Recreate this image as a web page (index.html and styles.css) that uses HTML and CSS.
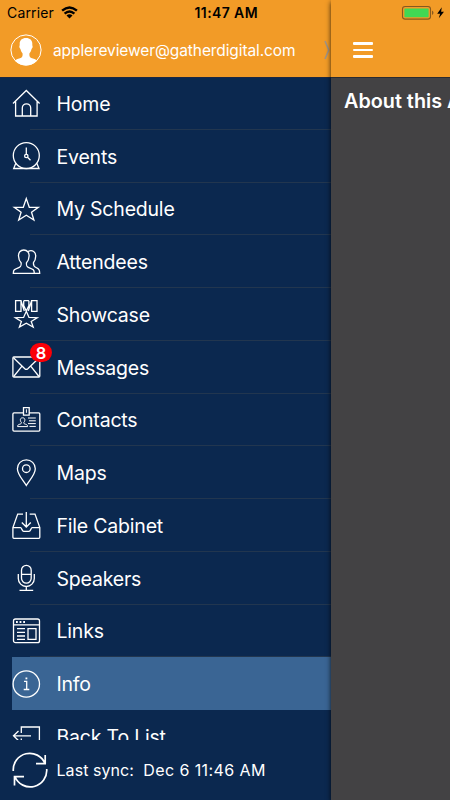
FILE: index.html
```html
<!DOCTYPE html>
<html lang="en">
<head>
    <meta charset="UTF-8">
    <meta name="viewport" content="width=device-width, initial-scale=1.0">
    <title>Info</title>
    <link rel="stylesheet" href="styles.css">
</head>
<body>
    <div class="screen">
        <div class="status">
            <span class="carrier">Carrier</span>
            <svg class="wifi" width="17" height="13" viewBox="0 0 17 13">
                <path d="M1.1 4.700 Q8.500 -1.700 15.900 4.700M3.600 7.700 Q8.500 3.300 13.400 7.700"/>
                <path class="dot" d="M5.500 9.500 Q8.500 7 11.500 9.500 L8.500 12.600z"/>
            </svg>
            <span class="time">11:47 AM</span>
            <svg class="battery" width="44" height="16" viewBox="0 0 44 16">
                <rect class="case" x="1.500" y="1.500" width="28" height="12.600" rx="2.600"/>
                <rect class="charge" x="3.400" y="3.400" width="24.200" height="8.800" rx=".6"/>
                <path class="tip" d="M31 5.600 q1.500 .7 1.500 2.200 t-1.500 2.200z"/>
                <path class="bolt" d="M40.800 2.200 L36.200 8.700 h2.900 L37.800 13.300 L43 6.800 h-2.900z"/>
            </svg>
        </div>

        <div class="menu">
            <div class="user">
                <svg class="avatar" width="32" height="32" viewBox="0 0 32 32">
                    <circle class="ring" cx="16" cy="16" r="15.1"/>
                    <path d="M16 3.900c-4.200 0-6.600 2.600-6.300 6.500.1 1.300-.5 1.600-.3 2.800.2 1 .9 1.100 1.100 2 .4 2 1.300 3 2 4 .4 3-.2 4.200-2.500 5.100-2.400.9-4.300 1.200-5.100 2.400A15.100 15.100 0 0 0 27.100 26.700c-.9-1.200-2.700-1.500-5.100-2.400-2.300-.9-2.900-2.100-2.500-5.100.7-1 1.600-2 2-4 .2-.9.900-1 1.100-2 .2-1.200-.4-1.500-.3-2.800.3-3.900-2.100-6.500-6.300-6.500z"/>
                </svg>
                <span class="email">applereviewer@gatherdigital.com</span>
                <svg class="chevron" width="6" height="20" viewBox="0 0 6 20"><path d="M1 1 L4.700 10 L1 19"/></svg>
            </div>

            <div class="list">
                <div class="item">
                    <svg class="icon" viewBox="0 0 30 30"><path d="M2 15.500 L15.300 2.500 L28.600 15.500M4.600 13.500V28H11.300V20a4.200 4.200 0 0 1 8.400 0V28H26.100V13.500M11.300 28h8.400"/></svg>
                    <span class="label">Home</span>
                </div>
                <div class="item">
                    <svg class="icon" viewBox="0 0 30 30"><circle cx="15.300" cy="14.600" r="13"/><circle cx="15.300" cy="15" r="1.700"/><path d="M15.300 6.400V13.300M16.500 16.200l3 3M4.800 22.300 L2.700 27.500H28L25.800 22.300"/></svg>
                    <span class="label">Events</span>
                </div>
                <div class="item">
                    <svg class="icon" viewBox="0 0 30 30"><path d="M15.300 4.600 L18.300 13.300H27.300L20.500 18.200 L22.900 26 L15.300 21.300 L7.700 26 L10.100 18.200 L3.300 13.300H12.300z"/></svg>
                    <span class="label">My Schedule</span>
                </div>
                <div class="item">
                    <svg class="icon" viewBox="0 0 30 30"><path d="M12.800 3C9.300 3 7.300 5.700 7.500 9c.1 3 .9 5 2.600 6.700.4 3.100-.2 4-2.800 5.100C3.400 22.300 2.300 22.700 2.300 26.300H23.300c0-3.600-1.100-4-5-5.500-2.600-1.100-3.200-2-2.800-5.100C17.200 14 18 12 18.100 9c.2-3.300-1.800-6-5.300-6zM17.300 4.300c4.200-1.800 7.600.8 7.400 4.900-.1 3-.7 4.700-2.200 6.300-.4 2.900.2 3.900 2.500 5 2.800 1.300 3.700 2.200 3.700 5.800H23.300"/></svg>
                    <span class="label">Attendees</span>
                </div>
                <div class="item">
                    <svg class="icon" viewBox="0 0 30 30"><path d="M15.300 12.300 L18 18.400 L26.200 18.700 L20.200 22.500 L22.200 28 L15.300 24.300 L8.400 28 L10.400 22.500 L4.400 18.700 L12.600 18.400zM4.600 1.700H10V12.300H4.600zM20.600 1.700H26V12.300H20.600zM12.700 1.700h5.200M10 1.700l3.300 10.300M20.600 1.700l-3.300 10.300M12.700 1.700v4.800l2.600 5.500 2.600-5.500v-4.800"/></svg>
                    <span class="label">Showcase</span>
                </div>
                <div class="item">
                    <svg class="icon" viewBox="0 0 30 30"><rect x="1.900" y="5" width="26.900" height="20" rx="1"/><path d="M2.500 5.700 L13.800 16.700q1.500 1.300 3 0L28.200 5.700M11 14.200 L2.700 24.500M19.700 14.200 L28 24.500"/></svg>
                    <span class="badge">8</span>
                    <span class="label">Messages</span>
                </div>
                <div class="item">
                    <svg class="icon" viewBox="0 0 30 30"><path d="M12.300 7.800H3q-1.100 0-1.100 1.100V25q0 1.100 1.100 1.100H27.700q1.100 0 1.100-1.100V8.900q0-1.100-1.100-1.100H18.300M12.500 2.700h5.700v7.500H12.500z"/><path class="thin" d="M15.400 4.300v3.500M11.600 12.800c-1.700 0-2.500 1.200-2.200 2.600.1 1 .5 1.600 1 2.100 0 1.200-.4 1.300-1.600 1.700-1.700.5-2.200.9-2.200 2.400h10c0-1.500-.5-1.900-2.200-2.400-1.200-.4-1.600-.5-1.600-1.700.5-.5.9-1.100 1-2.100.3-1.400-.5-2.600-2.200-2.600zM17 13h7.800M18 15.800h6.800M17 18.600h7.800M18.500 21.400h6.300"/></svg>
                    <span class="label">Contacts</span>
                </div>
                <div class="item">
                    <svg class="icon" viewBox="0 0 30 30"><path d="M15.300 1.800A8.900 8.900 0 0 0 6.400 10.700C6.400 16.500 12 22 15.300 27.400C18.600 22 24.300 16.500 24.300 10.700A8.900 8.900 0 0 0 15.300 1.800z"/><circle cx="15.300" cy="10.700" r="3.800"/></svg>
                    <span class="label">Maps</span>
                </div>
                <div class="item">
                    <svg class="icon" viewBox="0 0 30 30"><path d="M12 4.100H6.700L1.900 17.500V27.300q0 1 1 1H27.800q1 0 1-1V17.500L24 4.100H18.700M1.900 17.700H9.500c1.300 0 1.500 3.700 3.200 3.700h5.300c1.700 0 1.900-3.700 3.200-3.700h7.600M15.300 2V16.800M10.800 12.500l4.500 4.500 4.500-4.500"/></svg>
                    <span class="label">File Cabinet</span>
                </div>
                <div class="item">
                    <svg class="icon" viewBox="0 0 30 30"><rect x="10.500" y="2.400" width="9.700" height="17.800" rx="4.850"/><path d="M10.500 11.300h9.700M7.300 11v4.500a8 8 0 0 0 16 0V11M15.300 23.700v3.700M8.500 27.400h13.700"/></svg>
                    <span class="label">Speakers</span>
                </div>
                <div class="item">
                    <svg class="icon" viewBox="0 0 30 30"><rect x="2.500" y="3" width="26" height="23.700" rx="2"/><path d="M2.500 8.900h26M6 12.700h8M6 16.400h8M6 20h8M6 23.300h8M17 12.700h8v10.600h-8z"/><path class="dots" d="M5 6h1.800M8.600 6h1.800M12.200 6h1.800"/></svg>
                    <span class="label">Links</span>
                </div>
                <div class="item active">
                    <svg class="icon" viewBox="0 0 30 30"><circle cx="15.300" cy="15" r="13.200"/><path d="M13 12.400h2.700v8M12.700 20.500h5.600"/><path class="dots" d="M14.500 9.400h1.800"/></svg>
                    <span class="label">Info</span>
                </div>
                <div class="item">
                    <svg class="icon" viewBox="0 0 30 30"><path d="M10.300 12V6H28.400V24H10.300V17.500M20 14.800H2.500M7.500 10l-5 4.800 5 4.800"/></svg>
                    <span class="label">Back To List</span>
                </div>
            </div>

            <div class="sync">
                <svg class="refresh" width="36" height="36" viewBox="0 0 36 36"><path d="M1.300 19A16.500 16.500 0 0 1 33 11.500M33.200 3v8.700H24M34.700 17A16.500 16.500 0 0 1 3 24.700M2.500 33.500V24.700H12"/></svg>
                <span class="last">Last sync:</span>
                <span class="date">Dec 6 11:46 AM</span>
            </div>
        </div>

        <div class="page">
            <div class="navbar">
                <div class="burger"><i></i><i></i><i></i></div>
            </div>
            <h1 class="title">About this App</h1>
        </div>
    </div>
</body>
</html>
```

FILE: styles.css
```css
body{
    margin: 0;
    font-family: Inter, "Liberation Sans", sans-serif;
    color: white;
}
svg{
    flex: none;
    fill: none;
    stroke: white;
}
.screen{
    position: relative;
    display: flex;
    width: 450px;
    height: 800px;
    overflow: hidden;
}

/* status bar lies over both panels */
.status{
    position: absolute;
    z-index: 3;
    top: 0;
    left: 0;
    display: flex;
    align-items: center;
    box-sizing: border-box;
    width: 100%;
    height: 25px;
    padding: 0 5px 0 7px;
    color: black;
    font-size: 14px;
}
.carrier{
    width: 54px;
    letter-spacing: 0.15px;
}
.wifi{
    margin-top: -1px;
    stroke: black;
    stroke-width: 2.4;
}
.wifi .dot{
    fill: black;
    stroke: none;
}
.time{
    flex: 1;
    padding-left: 116.5px;
    font-weight: 600;
    letter-spacing: 0.4px;
}
.battery .case{
    stroke: #87591f;
    stroke-width: 1.1;
}
.battery .charge{
    fill: #41d854;
    stroke: none;
}
.battery .tip{
    fill: #87591f;
    stroke: none;
}
.battery .bolt{
    fill: black;
    stroke: none;
}

/* left menu */
.menu{
    display: flex;
    flex-direction: column;
    width: 331px;
    background-color: #0b284f;
}
.user{
    display: flex;
    align-items: center;
    box-sizing: border-box;
    height: 77px;
    padding: 25px 0 2px 10px;
    background-color: #f29b27;
    box-shadow: 0 1px 0 #1c2742;
}
.avatar{
    fill: white;
    stroke: none;
}
.avatar .ring{
    fill: none;
    stroke: white;
}
.email{
    width: 271px;
    margin-left: 11px;
    font-size: 15.5px;
    letter-spacing: -0.1px;
}
.chevron{
    stroke: #a09488;
    stroke-width: 1.6;
}
.list{
    height: 663px;
    overflow: hidden;
}
.item{
    position: relative;
    display: flex;
    align-items: center;
    box-sizing: border-box;
    height: 52.75px;
    margin-left: 12px;
}
.item::after{
    content: "";
    position: absolute;
    left: 18px;
    right: 0;
    bottom: 0;
    height: 1px;
    background-color: #22364f;
}
.item.active{
    background-color: #3a6594;
}
.item.active::after{
    display: none;
}
.icon{
    width: 30px;
    height: 30px;
    margin-left: -1px;
    stroke-width: 1.3;
}
.icon .thin{
    stroke-width: 1;
}
.icon .dots{
    stroke-width: 1.8;
}
.label{
    margin: 1px 0 0 15.5px;
    font-size: 19.5px;
    letter-spacing: -0.2px;
}
.badge{
    position: absolute;
    top: 2px;
    left: 18px;
    width: 22px;
    height: 19.5px;
    border-radius: 10px;
    background-color: #fb0007;
    font-size: 16.5px;
    font-weight: 600;
    line-height: 20px;
    text-align: center;
}
.sync{
    display: flex;
    align-items: center;
    height: 60px;
    padding-left: 12px;
    font-size: 16px;
}
.refresh{
    margin-right: 8.5px;
    stroke-width: 1.7;
}
.last{
    letter-spacing: 0.05px;
}
.date{
    margin-left: 9.5px;
    letter-spacing: 0.4px;
}

/* page pushed to the right */
.page{
    position: relative;
    z-index: 2;
    flex: 1;
    min-width: 0;
    background-color: #434244;
    box-shadow: 0 2px 5px rgba(0,0,0,0.8);
}
.navbar{
    box-sizing: border-box;
    height: 77px;
    padding: 42px 0 0 21.5px;
    background-color: #f29b27;
    box-shadow: 0 1px 0 #2b2b30;
}
.burger{
    display: flex;
    flex-direction: column;
    gap: 4px;
    width: 20px;
}
.burger i{
    height: 2.5px;
    border-radius: 1px;
    background-color: white;
}
.title{
    margin: 11px 0 0 13px;
    font-size: 19.8px;
    font-weight: 600;
    line-height: 26px;
    white-space: nowrap;
}
```
